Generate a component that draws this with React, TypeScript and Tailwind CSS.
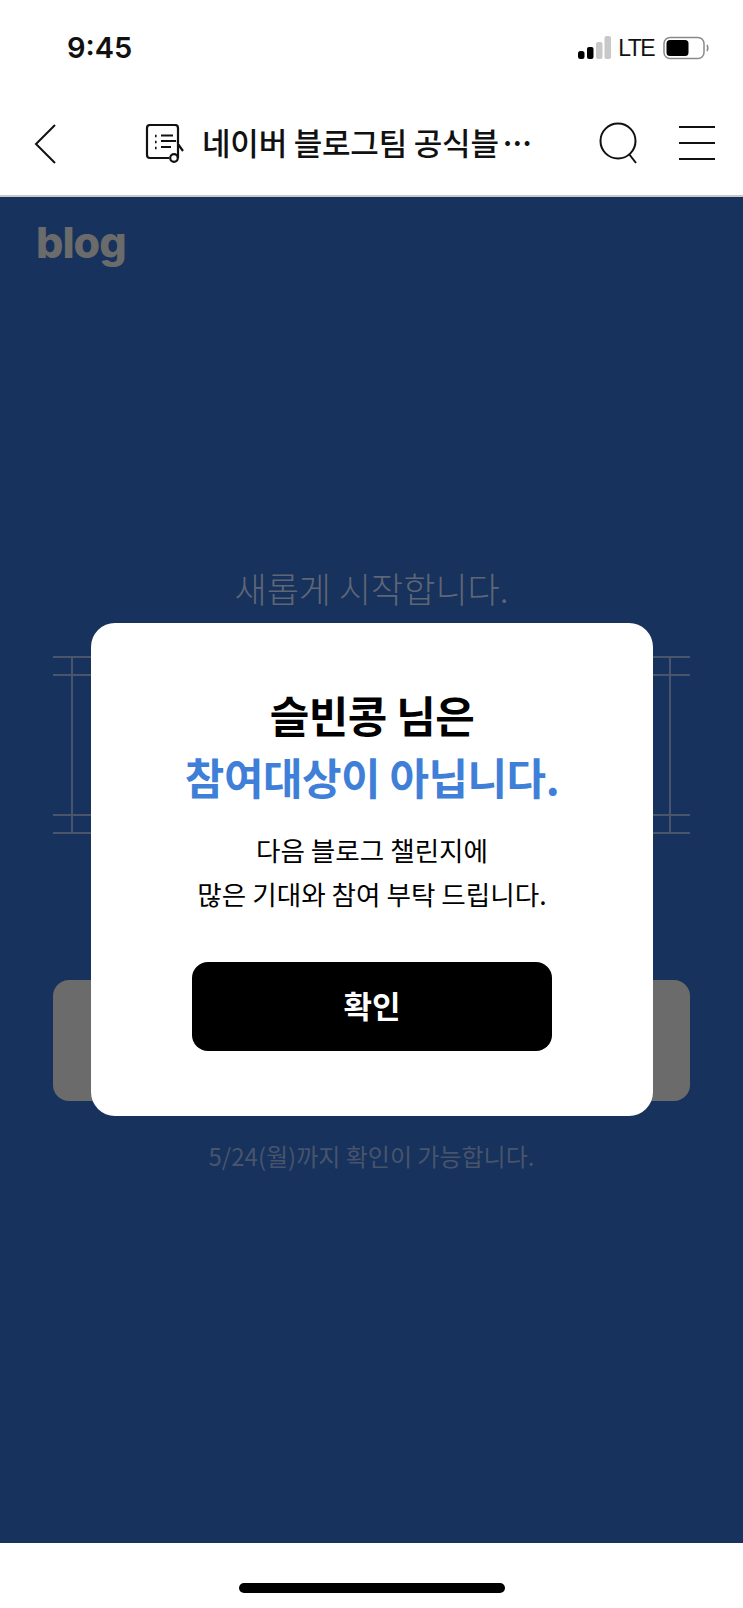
const kr = "font-['Noto_Sans_CJK_KR','Noto_Sans',sans-serif]";

function StatusBar() {
  return (
    <div className="h-[95px] flex justify-between pl-[67px] pr-[34px] pt-[29px] shrink-0">
      <span className="text-[29px] leading-[38px] font-semibold text-[#111] font-['Inter',sans-serif]">9:45</span>
      <div className="flex items-center gap-[6px] h-[38px]">
        <svg width="33" height="24" viewBox="0 0 33 24">
          <rect x="0" y="15" width="6.5" height="8" rx="2.5" fill="#000" />
          <rect x="9" y="11" width="6.5" height="12" rx="2" fill="#000" />
          <rect x="18" y="6" width="6.5" height="17" rx="2" fill="#c8c8c8" />
          <rect x="26.5" y="0" width="6.5" height="23" rx="2" fill="#c8c8c8" />
        </svg>
        <span className="text-[23px] leading-[38px] font-['Liberation_Sans',sans-serif] text-[#111] ml-[1px] tracking-[-1.6px] mr-[3px]">LTE</span>
        <svg width="46" height="24" viewBox="0 0 46 24">
          <rect x="1" y="1.5" width="40" height="21" rx="6" fill="none" stroke="#8a8a8a" strokeWidth="1.5" />
          <rect x="3.5" y="4" width="22" height="16" rx="3.5" fill="#000" />
          <path d="M44 9 q1.6 3 0 6" fill="none" stroke="#8a8a8a" strokeWidth="1.6" />
        </svg>
      </div>
    </div>
  );
}

function NavBar() {
  return (
    <div className="h-[102px] shrink-0 border-b-2 border-[#c9c9c9] flex items-center justify-between pl-[33px] pr-[28px] pb-[3px]">
      <svg width="24" height="42" viewBox="0 0 24 42" className="shrink-0">
        <path d="M22 2 L3 21 L22 40" fill="none" stroke="#111" strokeWidth="2" />
      </svg>
      <div className="flex items-center ml-[88px] mr-auto">
        <svg width="42" height="40" viewBox="0 0 42 40" className="shrink-0">
          <path d="M33 19 V4 a3 3 0 0 0 -3 -3 H5 a3 3 0 0 0 -3 3 V31 a3 3 0 0 0 3 3 H24" fill="none" stroke="#111" strokeWidth="2.2" />
          <path d="M10 12 h1.6 M10 18 h1.6 M10 24 h1.6" stroke="#111" strokeWidth="2.4" />
          <path d="M16 11.5 h12 M16 17 h15 M16 23 h10" stroke="#111" strokeWidth="2.2" />
          <circle cx="29" cy="34" r="3.8" fill="none" stroke="#111" strokeWidth="2.2" />
          <path d="M33 34 V20 L38 27" fill="none" stroke="#111" strokeWidth="2.2" />
        </svg>
        <span className={`${kr} text-[31px] leading-[40px] font-medium text-[#111] ml-[15px] mb-[3px] whitespace-nowrap tracking-[-0.2px]`}>
          네이버 블로그팀 공식블<span className="tracking-[-8px]">···</span>
        </span>
      </div>
      <svg width="42" height="42" viewBox="0 0 42 42" className="shrink-0 mr-[39px] mb-[2px]">
        <circle cx="20" cy="19" r="17.5" fill="none" stroke="#111" strokeWidth="2" />
        <path d="M31 32 L38 41" stroke="#111" strokeWidth="2" />
      </svg>
      <div className="flex flex-col gap-[14px] w-[36px] shrink-0 mb-[2px]">
        <div className="h-[2px] bg-[#111]" />
        <div className="h-[2px] bg-[#111]" />
        <div className="h-[2px] bg-[#111]" />
      </div>
    </div>
  );
}

// frame lines behind the modal, only the outer ends show
function FrameLines() {
  return (
    <div className="relative h-[178px] mt-[46px] mx-[53px] flex flex-col justify-between">
      <div className="flex flex-col gap-[16px]">
        <div className="h-[2px] bg-[#4a556c]" />
        <div className="h-[2px] bg-[#4a556c]" />
      </div>
      <div className="flex flex-col gap-[16px]">
        <div className="h-[2px] bg-[#4a556c]" />
        <div className="h-[2px] bg-[#4a556c]" />
      </div>
      <div className="absolute inset-y-0 left-[18px] w-[2px] bg-[#4a556c]" />
      <div className="absolute inset-y-0 right-[19px] w-[2px] bg-[#4a556c]" />
    </div>
  );
}

function Modal() {
  return (
    <div className="absolute left-[91px] top-[623px] w-[562px] h-[493px] bg-white rounded-[24px] flex flex-col items-center pt-[61px]">
      <div className={`${kr} text-[43px] leading-[61px] font-semibold text-black tracking-[-0.5px]`}>슬빈콩 님은</div>
      <div className={`${kr} text-[43px] leading-[62px] font-semibold text-[#3f7fd8] tracking-[-0.5px]`}>참여대상이 아닙니다.</div>
      <div className={`${kr} text-[26.6px] leading-[44px] text-black text-center mt-[21px]`}>
        <div>다음 블로그 챌린지에</div>
        <div>많은 기대와 참여 부탁 드립니다.</div>
      </div>
      <button className={`${kr} w-[360px] h-[89px] mt-[46px] pb-[3px] bg-black rounded-[16px] text-white text-[31px] font-semibold`}>확인</button>
    </div>
  );
}

export default function App() {
  return (
    <div className="relative w-[743px] h-[1608px] bg-white flex flex-col overflow-hidden">
      <StatusBar />
      <NavBar />
      <div className="flex-1 bg-[#17325c] flex flex-col">
        <div className="pl-[36px] pt-[19px] h-[60px]">
          <span className="font-['Inter',sans-serif] font-extrabold text-[43px] leading-[52px] text-[#6b6b6b] tracking-[-1px]">blog</span>
        </div>
        <div className={`${kr} mt-[309px] text-center text-[35px] leading-[44px] font-light text-[#5f6675]`}>새롭게 시작합니다.</div>
        <FrameLines />
        <div className="mx-[53px] mt-[146px] h-[121px] rounded-[16px] bg-[#6b6b6b]" />
        <div className={`${kr} mt-[37px] text-center text-[24px] leading-[36px] text-[#48546c]`}>5/24(월)까지 확인이 가능합니다.</div>
      </div>
      <div className="h-[65px] shrink-0 bg-white flex justify-center pt-[40px]">
        <div className="w-[266px] h-[10px] rounded-full bg-black" />
      </div>
      <Modal />
    </div>
  );
}
